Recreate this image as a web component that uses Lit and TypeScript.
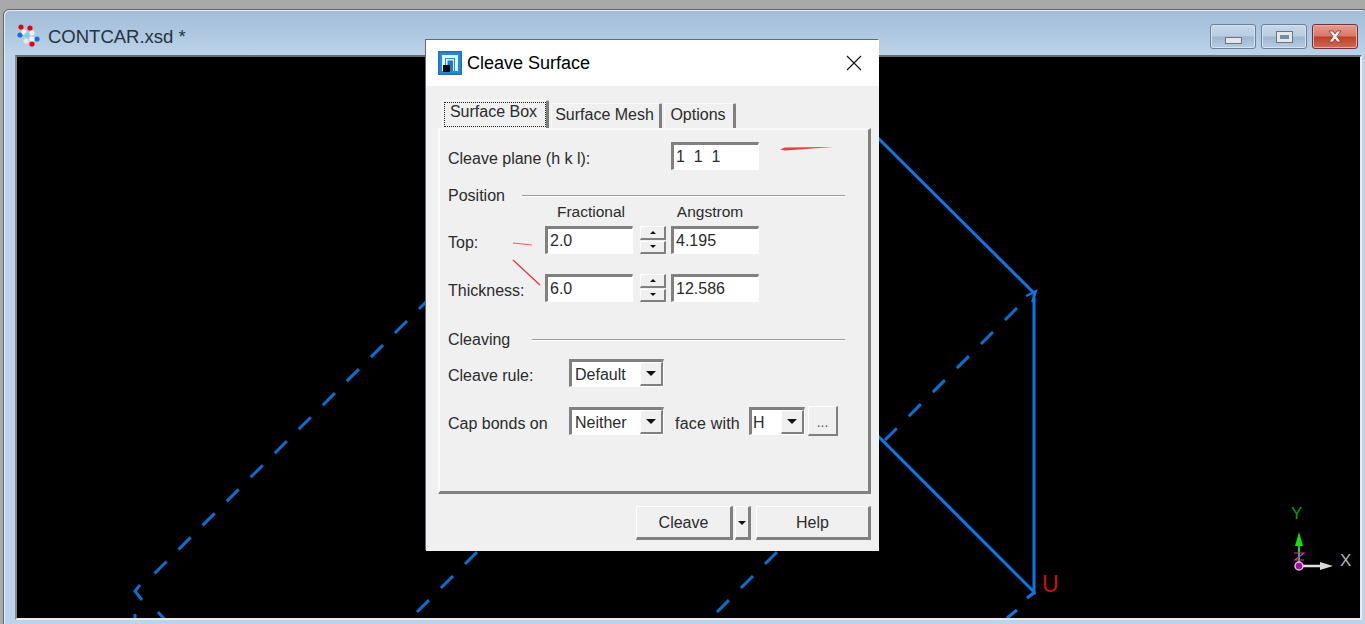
import { LitElement, css, html, svg } from 'lit';
import { customElement } from 'lit/decorators.js';

@customElement('app-root')
export class AppRoot extends LitElement {
  public static override styles = css`
    :host {
      display: block;
      position: relative;
      width: 1365px;
      height: 624px;
      overflow: hidden;
      background: #a9a9a9;
      font-family: 'Liberation Sans', Arial, sans-serif;
      color: #2b2b2b;
    }

    .window {
      position: absolute;
      inset: 9px -3px -10px 3px;
      box-sizing: border-box;
      border: 1px solid #5f6468;
      border-radius: 6px 6px 0 0;
      box-shadow: inset 1px 1px 0 #e6eef6;
      background: linear-gradient(#a3bcd7, #bbd4eb 46px);
      display: flex;
      flex-direction: column;
      padding-left: 11px;
      padding-right: 5px;
    }

    .titlebar {
      height: 45px;
      box-sizing: border-box;
      padding-top: 9px;
      display: flex;
      align-items: center;
      flex: none;
    }

    .mol { margin-left: 2px; width: 24px; height: 24px; margin-top: -2px; }

    .doc-title {
      margin-left: 7px;
      font-size: 18.5px;
      color: #26323e;
    }

    .win-buttons {
      margin-left: auto;
      margin-right: 4px;
      display: flex;
      gap: 5px;
      margin-top: -1px;
    }

    .win-btn {
      width: 46px;
      height: 25px;
      box-sizing: border-box;
      border: 1px solid #6d7f95;
      border-radius: 3px;
      box-shadow: inset 0 0 0 1px #d5e2ef;
      background: linear-gradient(#c6d8ea 0, #b9cde1 48%, #9cb6cf 52%, #b5cde3 100%);
      display: flex;
      align-items: center;
      justify-content: center;
    }

    .win-btn.close {
      border-color: #71303a;
      box-shadow: inset 0 0 0 1px #e5b0a6;
      background: linear-gradient(#e49b8d 0, #d9796a 48%, #bf3f26 52%, #cf6a52 100%);
    }

    .min-glyph {
      width: 15px;
      height: 5px;
      margin-top: 7px;
      border: 1px solid #6a7482;
      background: #e6e6e6;
    }

    .max-glyph {
      width: 9px;
      height: 4px;
      border: 3px solid #e6e6e6;
      outline: 1px solid #6a7482;
      background: #6f8caa;
    }

    .canvas {
      flex: none;
      width: 1347px;
      height: 565px;
      box-sizing: border-box;
      border: 2px solid;
      border-color: #6b6b6b #ececec #ececec #8a8a8a;
      background: #000;
    }

    .canvas svg { display: block; }

    .dialog {
      position: absolute;
      left: 426px;
      top: 40px;
      width: 453px;
      height: 511px;
      background: #f0f0f0;
      box-shadow: -1px -1px 0 #5f6b78;
      display: flex;
      flex-direction: column;
      font-size: 16px;
    }

    .dlg-title {
      height: 46px;
      flex: none;
      background: #fff;
      display: flex;
      align-items: center;
      padding-left: 12px;
      color: #000;
      font-size: 18px;
    }

    .dlg-title span { margin-left: 5px; }
    .dlg-title .x { margin-left: auto; margin-right: 17px; width: 16px; height: 16px; }

    .tabs {
      margin: 14px 0 0 16px;
      height: 28px;
      flex: none;
      display: flex;
      align-items: flex-end;
      gap: 2px;
    }

    .tab {
      box-sizing: border-box;
      height: 25px;
      background: #f0f0f0;
      border-top: 1px solid #fafafa;
      border-left: 1px solid #fafafa;
      border-right: 3px solid #808080;
      border-radius: 2px 2px 0 0;
      padding: 0 2px 2px 0;
      display: flex;
      align-items: center;
      justify-content: center;
      white-space: nowrap;
    }

    .tab.active {
      height: 28px;
      width: 107px;
      padding: 0;
      align-items: flex-start;
    }

    .tab.active span {
      box-sizing: border-box;
      margin-top: 1px;
      width: 102px;
      height: 25px;
      padding-right: 2px;
      border: 1px dotted #222;
      text-align: center;
      line-height: 17px;
    }

    .tab.mesh { width: 111px; }
    .tab.opts { width: 72px; }

    .panel {
      margin-left: 12px;
      width: 433px;
      height: 366px;
      flex: none;
      box-sizing: border-box;
      border: solid;
      border-width: 2px 3px 3px 2px;
      border-color: #fafafa #808080 #808080 #fafafa;
      padding: 12px 23px 0 8px;
    }

    .grid {
      display: grid;
      grid-template-columns: 97px 88px 38px 88px;
      align-items: center;
    }

    .grid.plane { height: 28px; }
    .grid.plane .lbl { grid-column: 1 / 4; margin-top: 5px; }

    .heading {
      display: flex;
      align-items: center;
      height: 18px;
    }

    .heading i {
      flex: 1;
      height: 0;
      border-top: 1px solid #9a9a9a;
      border-bottom: 1px solid #fff;
    }

    .heading.pos { margin-top: 17px; }
    .heading.pos i { margin-left: 17px; }
    .heading.cleaving { margin-top: 29px; }
    .heading.cleaving i { margin-left: 22px; }

    .cols { height: 18px; margin-top: -2px; }
    .cols span { text-align: center; grid-column: 2; font-size: 15.5px; padding-left: 4px; }
    .cols span + span { grid-column: 4; padding: 0 10px 0 0; }

    .grid.fields { margin-top: 5px; row-gap: 20px; }
    .fields .lbl { margin-top: 5px; }

    .input {
      box-sizing: border-box;
      height: 28px;
      border: solid;
      border-width: 3px 1px 1px 3px;
      border-color: #808080 #fff #fff #808080;
      background: #fff;
      padding-left: 2px;
      line-height: 24px;
      white-space: pre;
    }

    .spin {
      margin-left: 7px;
      width: 26px;
      height: 28px;
      display: flex;
      flex-direction: column;
      gap: 1px;
    }

    .spin div {
      flex: 1;
      box-sizing: border-box;
      border: solid;
      border-width: 1px 2px 2px 1px;
      border-color: #fff #808080 #808080 #fff;
      display: flex;
      align-items: center;
      justify-content: center;
    }

    .tri-up, .tri-down {
      width: 0;
      height: 0;
      border-left: 3px solid transparent;
      border-right: 3px solid transparent;
    }

    .tri-up { border-bottom: 3px solid #111; }
    .tri-down { border-top: 3px solid #111; }

    .row {
      display: flex;
      align-items: center;
      height: 28px;
      margin-top: 20px;
    }

    .row.first { margin-top: 10px; }
    .row .lbl { width: 121px; flex: none; margin-top: 6px; }

    .combo {
      box-sizing: border-box;
      width: 95px;
      height: 28px;
      flex: none;
      display: flex;
      border: solid;
      border-width: 3px 1px 1px 3px;
      border-color: #808080 #fff #fff #808080;
      background: #fff;
    }

    .combo.short { width: 56px; margin-left: 9px; }
    .combo span { flex: 1; padding: 2px 0 0 3px; line-height: 21px; }
    .combo.short span { padding-left: 1px; }

    .combo b {
      width: 23px;
      flex: none;
      box-sizing: border-box;
      background: #f0f0f0;
      border: solid;
      border-width: 1px 2px 2px 1px;
      border-color: #fff #808080 #808080 #fff;
      display: flex;
      align-items: center;
      justify-content: center;
    }

    .tri-big {
      width: 0;
      height: 0;
      border-left: 5px solid transparent;
      border-right: 5px solid transparent;
      border-top: 5px solid #111;
    }

    .face { margin-left: 11px; margin-top: 6px; width: 65px; flex: none; letter-spacing: 0.2px; }

    .dots {
      margin-left: 3px;
      width: 30px;
      height: 30px;
      flex: none;
      box-sizing: border-box;
      border: solid;
      border-width: 1px 2px 2px 1px;
      border-color: #fff #808080 #808080 #fff;
      text-align: center;
      line-height: 30px;
      font-size: 14px;
      color: #555;
    }

    .footer {
      margin: 12px 8px 0 0;
      height: 34px;
      display: flex;
      justify-content: flex-end;
    }

    .btn {
      box-sizing: border-box;
      height: 34px;
      padding-top: 2px;
      border: solid;
      border-width: 1px 3px 3px 1px;
      border-color: #fff #808080 #808080 #fff;
      display: flex;
      align-items: center;
      justify-content: center;
    }

    .btn.cleave { width: 97px; }
    .btn.drop { width: 16px; margin-left: 2px; }
    .btn.drop .tri-big { border-width: 4px 4px 0; }
    .btn.help { width: 115px; margin-left: 5px; }

    .notes {
      position: absolute;
      left: 0;
      top: 0;
      pointer-events: none;
    }
  `;

  public override render() {
    return html`
      <div class="window">
        <div class="titlebar">
          ${this.renderMolecule()}
          <span class="doc-title">CONTCAR.xsd *</span>
          <div class="win-buttons">
            <div class="win-btn"><div class="min-glyph"></div></div>
            <div class="win-btn"><div class="max-glyph"></div></div>
            <div class="win-btn close">
              <svg width="18" height="13" viewBox="0 0 18 13">
                <path d="M3 1h4l2 3 2-3h4l-4 5.500 4 5.500h-4l-2-3-2 3H3l4-5.500z" fill="#eee" stroke="#7c3a34" stroke-width="0.8" />
              </svg>
            </div>
          </div>
        </div>
        <div class="canvas">${this.renderScene()}</div>
      </div>

      <div class="dialog">
        <div class="dlg-title">
          <svg width="24" height="24" viewBox="0 0 24 24">
            <rect width="24" height="24" fill="#2f6fa8" />
            <rect x="1.500" y="1.500" width="21" height="21" fill="#1d8de0" />
            <path d="M4 20V4h16v16h-3V7H7v13z" fill="#e8f3fb" />
            <path d="M8 20V8h8v12z" fill="#e8f3fb" />
            <path d="M9.500 20V9.500H15V20z" fill="#1d7cc8" />
            <rect x="5" y="14" width="7" height="7" fill="#0b0b0b" />
          </svg>
          <span>Cleave Surface</span>
          <svg class="x" viewBox="0 0 16 16">
            <path d="M1 1l14 14M15 1L1 15" stroke="#111" stroke-width="1.100" fill="none" />
          </svg>
        </div>

        <div class="tabs">
          <div class="tab active"><span>Surface Box</span></div>
          <div class="tab mesh">Surface Mesh</div>
          <div class="tab opts">Options</div>
        </div>

        <div class="panel">
          <div class="grid plane">
            <div class="lbl">Cleave plane (h k l):</div>
            <div class="input">1  1  1</div>
          </div>

          <div class="heading pos"><span>Position</span><i></i></div>
          <div class="grid cols"><span>Fractional</span><span>Angstrom</span></div>
          <div class="grid fields">
            <div class="lbl">Top:</div>
            <div class="input">2.0</div>
            ${this.renderSpin()}
            <div class="input">4.195</div>
            <div class="lbl">Thickness:</div>
            <div class="input">6.0</div>
            ${this.renderSpin()}
            <div class="input">12.586</div>
          </div>

          <div class="heading cleaving"><span>Cleaving</span><i></i></div>
          <div class="row first">
            <div class="lbl">Cleave rule:</div>
            ${this.renderCombo('Default')}
          </div>
          <div class="row">
            <div class="lbl">Cap bonds on</div>
            ${this.renderCombo('Neither')}
            <div class="face">face with</div>
            ${this.renderCombo('H', true)}
            <div class="dots">...</div>
          </div>
        </div>

        <div class="footer">
          <div class="btn cleave">Cleave</div>
          <div class="btn drop"><div class="tri-big"></div></div>
          <div class="btn help">Help</div>
        </div>

        <svg class="notes" width="453" height="511" viewBox="426 40 453 511">
          <path d="M780 149.500l5-2 48-.5-48 3.500z" fill="#f23a3a" />
          <path d="M513 243l19 2" stroke="#f05a5a" stroke-width="1" />
          <path d="M513 260l27 25" stroke="#ee3030" stroke-width="1.200" />
        </svg>
      </div>
    `;
  }

  private renderSpin() {
    return html`
      <div class="spin">
        <div><span class="tri-up"></span></div>
        <div><span class="tri-down"></span></div>
      </div>
    `;
  }

  private renderCombo(value: string, short = false) {
    return html`
      <div class="combo ${short ? 'short' : ''}">
        <span>${value}</span>
        <b><div class="tri-big"></div></b>
      </div>
    `;
  }

  private renderMolecule() {
    const atoms: [number, number, string][] = [
      [22, 27, '#e8000c'],
      [31, 28, '#e8000c'],
      [21, 35, '#1470d8'],
      [25, 32, '#f0f0f0'],
      [33, 33, '#f0f0f0'],
      [28, 35, '#7fd0e0'],
      [38, 39, '#1470d8'],
      [27, 41, '#e8e8e8'],
      [33, 39, '#f4f4f4'],
      [33, 44, '#e8000c']
    ];
    return html`
      <svg class="mol" viewBox="18 24 24 24">
        ${atoms.map(([x, y, fill]) => svg`<circle cx=${x} cy=${y} r="2.600" fill=${fill} />`)}
      </svg>
    `;
  }

  // drawn in page coordinates, viewBox is the black area of the window
  private renderScene() {
    return html`
      <svg width="1343" height="561" viewBox="17 57 1343 561">
        <g fill="none" stroke="#0a78e8" stroke-width="3">
          <path d="M870 130L1034 293V592L870 428" />
          <path d="M1035 592L1027 598M1017 610L1007 618" />
          <path d="M1026 296L1036 291L1032 302" stroke-width="2" />
        </g>
        <g fill="none" stroke="#0b6fd0" stroke-width="3">
          <g stroke-dasharray="17 17">
            <path d="M1017 308L885 440" />
            <path d="M431 297L143 585" />
            <path d="M477 552L417 612" />
            <path d="M777 552L717 612" />
          </g>
          <path d="M140 585L135 591L142 600M135 614V620M158 612L165 620" />
        </g>
        <text x="1042" y="592" font-size="23" fill="#c81018" font-family="Liberation Sans">U</text>
        <text x="1291" y="519" font-size="17" fill="#0a9c0a" font-family="Liberation Sans">Y</text>
        <text x="1340" y="566" font-size="17" fill="#b4b4b4" font-family="Liberation Sans">X</text>
        <path d="M1299 566V545" stroke="#18d018" stroke-width="2" />
        <path d="M1299 532l4 14h-8z" fill="#10e010" />
        <path d="M1299 566h22" stroke="#e0e0e0" stroke-width="2.500" />
        <path d="M1333 566l-13-4v8z" fill="#d8d8d8" />
        <path d="M1294 553h10l-9 7h9" fill="none" stroke="#d828d8" stroke-width="1.200" />
        <circle cx="1299" cy="566" r="4" fill="#a010a0" stroke="#e8b8e8" stroke-width="1.500" />
      </svg>
    `;
  }
}
